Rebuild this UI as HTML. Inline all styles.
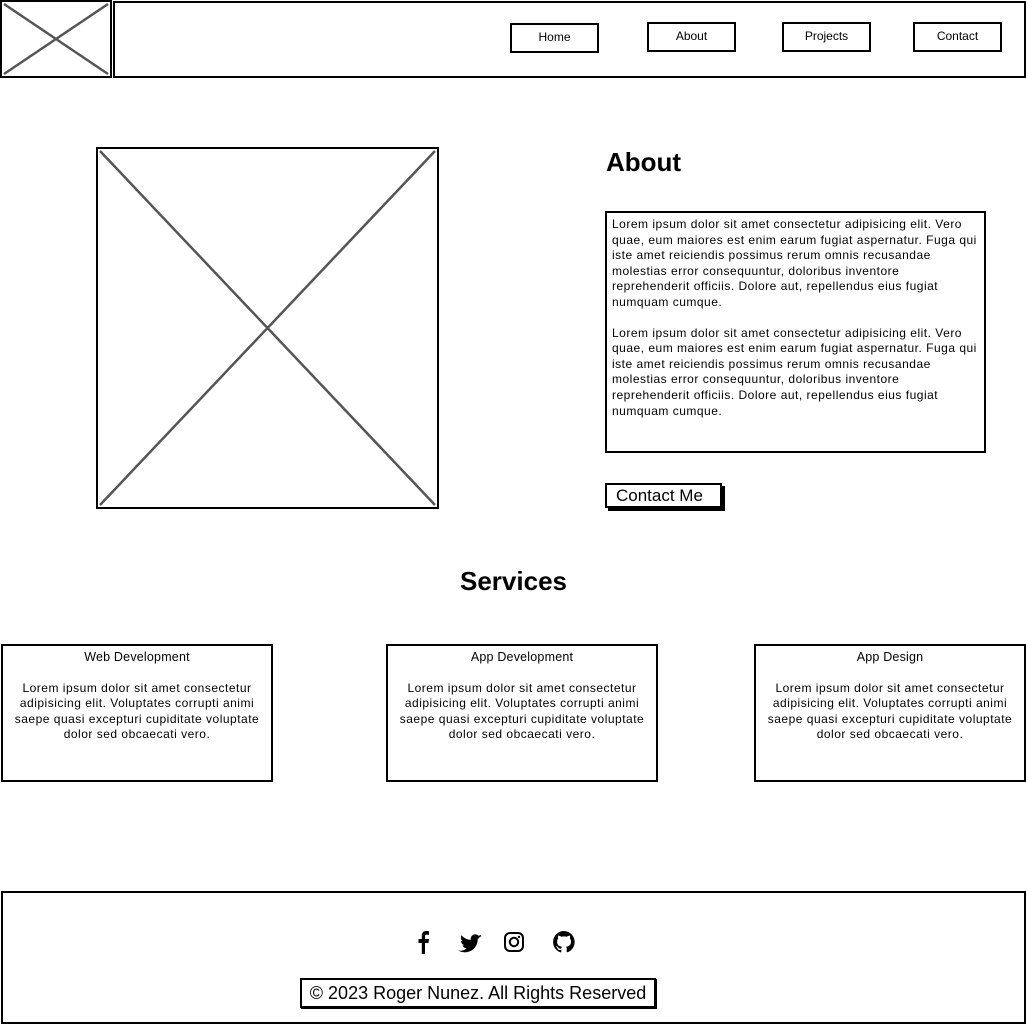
<!DOCTYPE html>
<html><head><meta charset="utf-8"><style>
*{box-sizing:border-box;margin:0;padding:0}
body{width:1027px;height:1025px;background:#fff;font-family:"Liberation Sans",sans-serif;color:#000;position:relative;overflow:hidden}
.b{position:absolute;border:2px solid #000;background:#fff}
.nav{position:absolute;border:2px solid #000;font-size:12px;text-align:center;line-height:24px;width:89px;height:30px;padding-top:0}
svg.x{position:absolute}
.card{position:absolute;top:644px;width:272px;height:138px;border:2px solid #000;font-size:12px;letter-spacing:0.5px;text-align:center;line-height:15.5px;padding:4px 6px}
.card h4{font-weight:normal;font-size:12.5px;letter-spacing:0.2px;margin-bottom:15px}
p.t{font-size:12px;line-height:15.6px;letter-spacing:0.5px}
</style></head><body>
<div class="b" style="left:0;top:0;width:112px;height:78px"></div>
<svg class="x" style="left:0;top:0" width="112" height="78"><line x1="4" y1="4" x2="108" y2="74" stroke="#555" stroke-width="2.5"/><line x1="108" y1="4" x2="4" y2="74" stroke="#555" stroke-width="2.5"/></svg>
<div class="b" style="left:113px;top:1px;width:913px;height:77px"></div>
<div class="nav" style="left:510px;top:23px">Home</div>
<div class="nav" style="left:647px;top:22px">About</div>
<div class="nav" style="left:782px;top:22px">Projects</div>
<div class="nav" style="left:913px;top:22px">Contact</div>

<div class="b" style="left:96px;top:147px;width:343px;height:362px"></div>
<svg class="x" style="left:96px;top:147px" width="343" height="362"><line x1="4" y1="4" x2="339" y2="358" stroke="#555" stroke-width="2.5"/><line x1="339" y1="4" x2="4" y2="358" stroke="#555" stroke-width="2.5"/></svg>

<div style="position:absolute;left:606px;top:147px;font-size:26px;font-weight:bold">About</div>
<div class="b" style="left:605px;top:211px;width:381px;height:242px;padding:4px 5px">
<p class="t">Lorem ipsum dolor sit amet consectetur adipisicing elit. Vero quae, eum maiores est enim earum fugiat aspernatur. Fuga qui iste amet reiciendis possimus rerum omnis recusandae molestias error consequuntur, doloribus inventore reprehenderit officiis. Dolore aut, repellendus eius fugiat numquam cumque.</p>
<p class="t" style="margin-top:15px">Lorem ipsum dolor sit amet consectetur adipisicing elit. Vero quae, eum maiores est enim earum fugiat aspernatur. Fuga qui iste amet reiciendis possimus rerum omnis recusandae molestias error consequuntur, doloribus inventore reprehenderit officiis. Dolore aut, repellendus eius fugiat numquam cumque.</p>
</div>
<div class="b" style="left:605px;top:483px;width:117px;height:25px;font-size:17px;line-height:21px;padding-left:9px;box-shadow:3px 3px 0 #000">Contact Me</div>

<div style="position:absolute;left:0;width:1027px;top:566px;text-align:center;font-size:26px;font-weight:bold">Services</div>
<div class="card" style="left:1px"><h4>Web Development</h4>Lorem ipsum dolor sit amet consectetur adipisicing elit. Voluptates corrupti animi saepe quasi excepturi cupiditate voluptate dolor sed obcaecati vero.</div>
<div class="card" style="left:386px"><h4>App Development</h4>Lorem ipsum dolor sit amet consectetur adipisicing elit. Voluptates corrupti animi saepe quasi excepturi cupiditate voluptate dolor sed obcaecati vero.</div>
<div class="card" style="left:754px"><h4>App Design</h4>Lorem ipsum dolor sit amet consectetur adipisicing elit. Voluptates corrupti animi saepe quasi excepturi cupiditate voluptate dolor sed obcaecati vero.</div>

<div class="b" style="left:1px;top:891px;width:1025px;height:133px"></div>
<svg class="x" style="left:410px;top:930px" width="170" height="26">
<path d="M15 24V13h3.5l.5-4H15V6.5c0-1.1.4-1.8 2-1.8h2V1.3C18.6 1.2 17.5 1 16.3 1 13.6 1 11.8 2.6 11.8 5.6V9H8.5v4h3.3v11z" fill="#000"/>
<path d="M72 6.5c-.8.4-1.7.6-2.6.7.9-.6 1.6-1.4 2-2.5-.9.5-1.9.9-2.9 1.1a4.5 4.5 0 0 0-7.7 4.1c-3.7-.2-7-2-9.3-4.7-1.2 2.1-.5 4.7 1.4 6-.7 0-1.4-.2-2-.6 0 2.200 1.5 4.1 3.6 4.5-.7.2-1.4.2-2 .1.6 1.8 2.3 3.1 4.2 3.1A9 9 0 0 1 48 20.3 12.8 12.8 0 0 0 67.7 9.5V9c.9-.6 1.7-1.4 2.3-2.3z" fill="#000"/>
<rect x="95" y="3" width="18" height="18" rx="5" fill="none" stroke="#000" stroke-width="2"/><circle cx="104" cy="12" r="4.2" fill="none" stroke="#000" stroke-width="2"/><circle cx="109" cy="7" r="1.2" fill="#000"/>
<path d="M154 1a11 11 0 0 0-3.5 21.4c.6.1.8-.2.8-.5v-2c-3.1.7-3.7-1.3-3.7-1.3-.5-1.3-1.2-1.6-1.2-1.6-1-.7.1-.7.1-.7 1.1.1 1.7 1.1 1.7 1.1 1 1.7 2.6 1.2 3.2.9.1-.7.4-1.2.7-1.5-2.4-.3-5-1.2-5-5.4 0-1.2.4-2.200 1.1-2.9-.1-.3-.5-1.4.1-2.9 0 0 .9-.3 3 1.1a10.4 10.4 0 0 1 5.5 0c2.1-1.4 3-1.1 3-1.1.6 1.5.2 2.6.1 2.9.7.8 1.1 1.7 1.1 2.9 0 4.2-2.6 5.1-5 5.400.4.3.7 1 .7 2v3c0 .3.2.6.8.5A11 11 0 0 0 154 1z" fill="#000"/>
</svg>
<div class="b" style="left:300px;top:978px;width:356px;height:30px;font-size:18px;line-height:26px;text-align:center;box-shadow:1px 1px 0 #000">© 2023 Roger Nunez. All Rights Reserved</div>
</body></html>
